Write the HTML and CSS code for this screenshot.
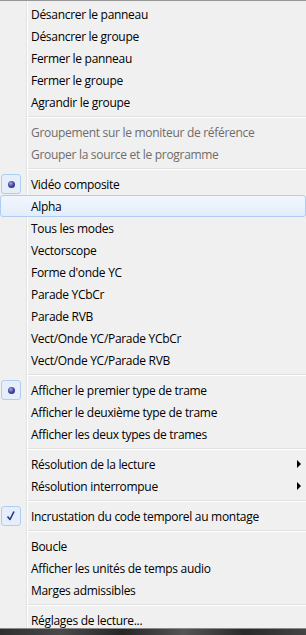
FILE: index.html
```html
<!DOCTYPE html>
<html lang="fr">
<head>
<meta charset="utf-8">
<title>Menu</title>
<link rel="stylesheet" href="styles.css">
</head>
<body>
<div class="menu">
  <div class="item"><span class="label">Désancrer le panneau</span></div>
  <div class="item"><span class="label">Désancrer le groupe</span></div>
  <div class="item"><span class="label">Fermer le panneau</span></div>
  <div class="item"><span class="label">Fermer le groupe</span></div>
  <div class="item"><span class="label">Agrandir le groupe</span></div>
  <div class="sep"></div>
  <div class="item disabled"><span class="label">Groupement sur le moniteur de référence</span></div>
  <div class="item disabled"><span class="label">Grouper la source et le programme</span></div>
  <div class="sep"></div>
  <div class="item"><span class="mark"><span class="bullet"></span></span><span class="label">Vidéo composite</span></div>
  <div class="item hover"><span class="label">Alpha</span></div>
  <div class="item"><span class="label">Tous les modes</span></div>
  <div class="item"><span class="label">Vectorscope</span></div>
  <div class="item"><span class="label">Forme d'onde YC</span></div>
  <div class="item"><span class="label">Parade YCbCr</span></div>
  <div class="item"><span class="label">Parade RVB</span></div>
  <div class="item"><span class="label">Vect/Onde YC/Parade YCbCr</span></div>
  <div class="item"><span class="label">Vect/Onde YC/Parade RVB</span></div>
  <div class="sep"></div>
  <div class="item"><span class="mark"><span class="bullet"></span></span><span class="label">Afficher le premier type de trame</span></div>
  <div class="item"><span class="label">Afficher le deuxième type de trame</span></div>
  <div class="item"><span class="label">Afficher les deux types de trames</span></div>
  <div class="sep"></div>
  <div class="item"><span class="label">Résolution de la lecture</span><span class="arrow"></span></div>
  <div class="item"><span class="label">Résolution interrompue</span><span class="arrow"></span></div>
  <div class="sep"></div>
  <div class="item"><span class="mark"><svg class="check" width="18" height="18" viewBox="0 0 18 18"><path d="M5.5 9.5 L8 12.5 L12 4.5" fill="none" stroke="#23378f" stroke-width="1.6" stroke-linejoin="round"/></svg></span><span class="label">Incrustation du code temporel au montage</span></div>
  <div class="sep"></div>
  <div class="item"><span class="label">Boucle</span></div>
  <div class="item"><span class="label">Afficher les unités de temps audio</span></div>
  <div class="item"><span class="label">Marges admissibles</span></div>
  <div class="sep"></div>
  <div class="item"><span class="label">Réglages de lecture...</span></div>
</div>
<div class="desk"></div>
</body>
</html>
```
FILE: styles.css
```css
html, body {
  margin: 0;
  padding: 0;
  background: #f0f0f0;
  overflow: hidden;
}
body {
  font-family: "Open Sans", "Noto Sans", "DejaVu Sans", sans-serif;
  font-size: 12px;
  color: #000;
}
.menu {
  border-top: 1px solid #979797;
  padding-top: 2px;
  height: 628px;
  box-sizing: border-box;
  background:
    linear-gradient(to right, transparent 26px, #e2e3e3 26px, #e2e3e3 27px, #ffffff 27px, #ffffff 28px, transparent 28px),
    #f0f0f0;
}
.item {
  position: relative;
  height: 22px;
  display: flex;
  align-items: center;
  padding-left: 31px;
  box-sizing: border-box;
  white-space: nowrap;
}
.label {
  flex: 1;
  letter-spacing: -0.3px;
}
.disabled {
  color: #6d6d6d;
}
.hover {
  border: 1px solid #aecdf3;
  border-radius: 3px;
  padding-left: 30px;
  background: linear-gradient(#f1f6fd, #e3edfa);
}
.sep {
  height: 8px;
  display: flex;
  align-items: center;
  padding-left: 28px;
}
.sep::before {
  content: "";
  flex: 1;
  height: 1px;
  background: #e0e0e0;
  border-bottom: 1px solid #ffffff;
}
.mark {
  position: absolute;
  left: 1px;
  top: 1px;
  width: 20px;
  height: 20px;
  box-sizing: border-box;
  border: 1px solid #aecdf3;
  border-radius: 3px;
  background: #e6eefa;
  display: flex;
  align-items: center;
  justify-content: center;
}
.bullet {
  width: 7px;
  height: 7px;
  border-radius: 50%;
  background: radial-gradient(circle at 40% 35%, #a9a9e6 0, #4a4aa8 45%, #1e1e66 100%);
}
.check {
  display: block;
}
.arrow {
  width: 0;
  height: 0;
  border-left: 4px solid #000;
  border-top: 4px solid transparent;
  border-bottom: 4px solid transparent;
  margin-right: 5px;
}
.desk {
  height: 10px;
  border-top: 1px solid #8a8a8a;
  background: linear-gradient(to right, #2e2e2e, #4a4a4a 20%, #262626 40%, #555 60%, #2a2a2a 80%, #444);
}
```
